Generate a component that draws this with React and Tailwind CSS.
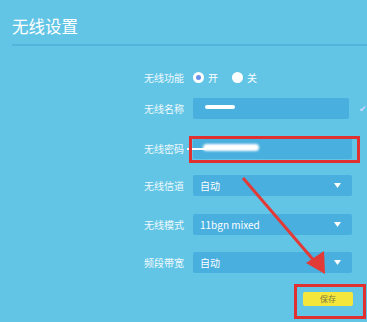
import React from "react";

function Field({ label, children, className = "" }) {
  return (
    <div className={`flex h-[21px] items-center ${className}`}>
      <span className="w-[49px] shrink-0 text-[10px] text-white/90">{label}</span>
      {children}
    </div>
  );
}

function Select({ value }) {
  return (
    <div className="flex h-[21px] w-[159px] items-center justify-between rounded-[2px] bg-[#48afdf] pl-[7px] pr-[11px] text-[10px] text-white">
      <span>{value}</span>
      <svg width="7" height="5" viewBox="0 0 7 5">
        <path d="M0 0h7L3.5 5z" fill="white" />
      </svg>
    </div>
  );
}

export default function App() {
  return (
    <div
      className="relative h-[322px] w-[367px] overflow-hidden bg-[#63c5e5]"
      style={{ fontFamily: '"Noto Sans CJK SC", "Noto Sans", sans-serif' }}
    >
      <div className="pl-[12px] pt-[14px]">
        <h1 className="text-[16.5px] leading-[24px] text-white">无线设置</h1>
        <div className="mt-[6px] h-[2px] bg-[#52b6dc]" />
      </div>

      <div className="ml-[144px] mt-[25px] flex flex-col">
        <div className="flex h-[12px] items-center">
          <span className="w-[49px] shrink-0 text-[10px] text-white/90">无线功能</span>
          <span className="flex h-[11px] w-[11px] items-center justify-center rounded-full bg-white">
            <span className="h-[5px] w-[5px] rounded-full bg-[#6b8fe8]" />
          </span>
          <span className="ml-[4px] text-[10px] text-white">开</span>
          <span className="ml-[14px] h-[11px] w-[11px] rounded-full bg-white" />
          <span className="ml-[4px] text-[10px] text-white">关</span>
        </div>

        <Field label="无线名称" className="mt-[15px]">
          <div className="relative h-[21px] w-[159px] rounded-[2px] bg-[#48afdf]">
            <span className="absolute left-[12px] top-[7px] h-[4px] w-[30px] rounded-full bg-white blur-[0.6px]" />
          </div>
          <span className="ml-[10px] text-[9px] text-[#c9d6ff]">✔</span>
        </Field>

        <Field label="无线密码" className="mt-[19px]">
          <div className="relative h-[21px] w-[159px] rounded-[2px] bg-[#48afdf]">
            <span className="absolute -left-[6px] top-[10px] h-[2px] w-[20px] bg-white blur-[0.4px]" />
            <span className="absolute left-[10px] top-[6px] h-[7px] w-[56px] rounded-full bg-white blur-[0.8px]" />
          </div>
        </Field>

        <Field label="无线信道" className="mt-[16px]">
          <Select value="自动" />
        </Field>

        <Field label="无线模式" className="mt-[18px]">
          <Select value="11bgn mixed" />
        </Field>

        <Field label="频段带宽" className="mt-[17px]">
          <Select value="自动" />
        </Field>

        <div className="ml-[159px] mt-[19px] flex h-[14px] w-[50px] items-center justify-center rounded-[2px] bg-[#f4e63a] text-[8px] text-[#7d7a3a]">
          保存
        </div>
      </div>

      <div className="absolute left-[189px] top-[136px] h-[27px] w-[171px] border-[3px] border-[#e0302f]" />
      <div className="absolute left-[294px] top-[284px] h-[35px] w-[72px] border-[3px] border-[#e0302f]" />

      <svg className="absolute left-0 top-0" width="367" height="322" viewBox="0 0 367 322">
        <line x1="243" y1="178" x2="316" y2="263" stroke="#e23a36" strokeWidth="3" />
        <path d="M325 274 L306 263 L324 251 Z" fill="#e23a36" />
      </svg>
    </div>
  );
}
